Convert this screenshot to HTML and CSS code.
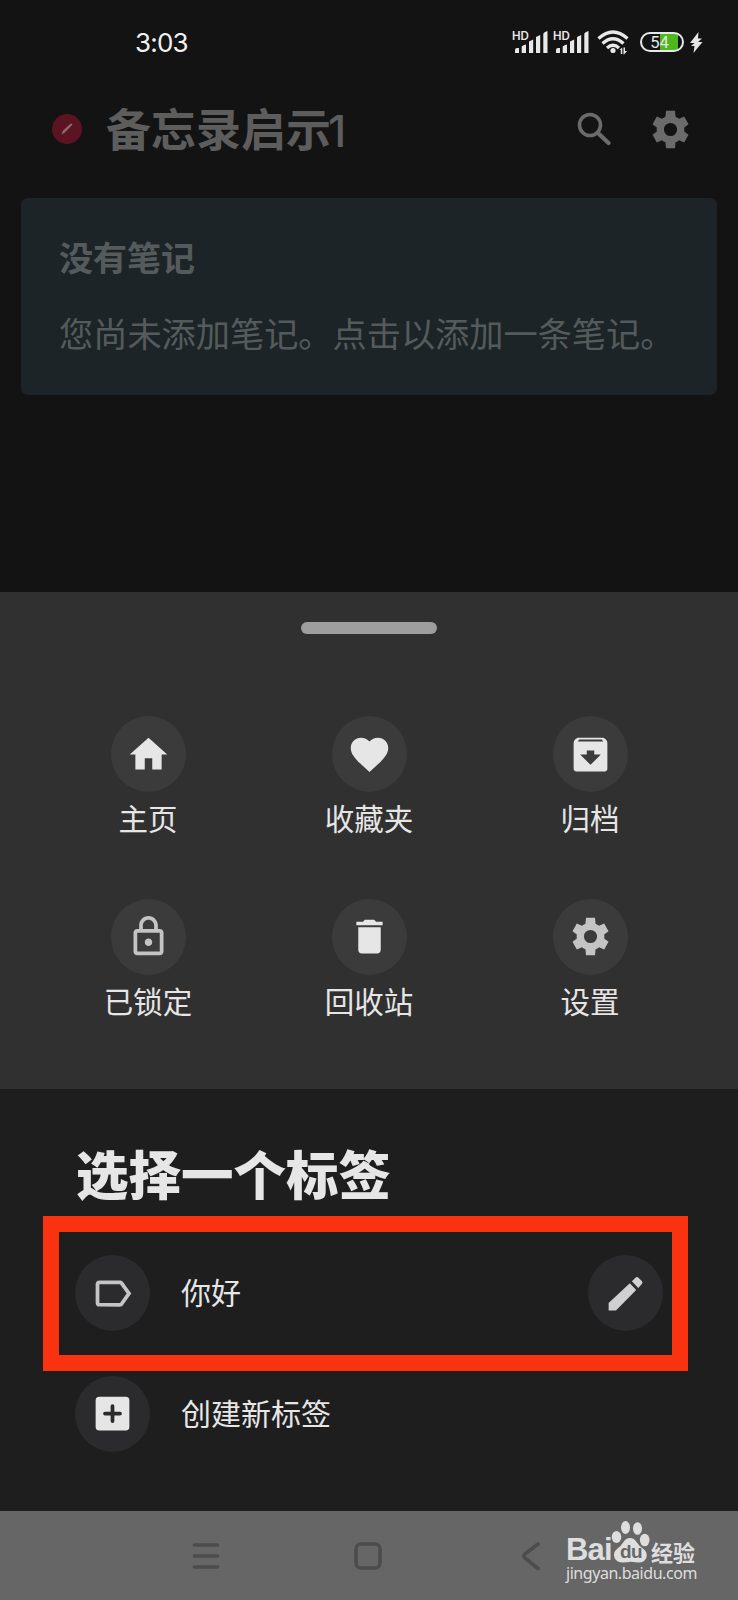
FILE: index.html
```html
<!DOCTYPE html>
<html lang="zh-CN">
<head>
    <meta charset="UTF-8">
    <title>备忘录启示1</title>
    <link rel="stylesheet" href="styles.css">
</head>
<body>
    <svg class="defs">
        <symbol id="gear" viewBox="0 0 24 24">
            <path d="M19.300 13.100c.1-.7.1-1.500 0-2.200l2.300-1.700-2.300-4.100-2.700 1.200c-.6-.5-1.200-.8-1.900-1.100L14.400 2H9.600l-.3 3.200c-.7.300-1.300.600-1.900 1.100L4.700 5.100 2.400 9.200l2.300 1.700c-.1.700-.1 1.500 0 2.200l-2.300 1.700 2.300 4.100 2.700-1.200c.6.500 1.200.8 1.900 1.100l.3 3.200h4.800l.3-3.200c.7-.3 1.300-.6 1.900-1.100l2.700 1.200 2.300-4.100zM12 15.500a3.500 3.500 0 1 1 0-7 3.500 3.500 0 0 1 0 7z"/>
        </symbol>
        <symbol id="signal" viewBox="0 0 34 23">
            <path d="M1 23v-3q0-2 2-2h2v5zM7.700 23v-6q0-1.500 4.300-2.500v8.500zM15 23V11.500l4.200-2V23zM22 23V7l4.200-2V23zM29.300 23V4q0-1.500 4.200-3V23z"/>
        </symbol>
    </svg>

    <div class="status-bar">
        <span class="time">3:03</span>
        <div class="status-icons">
            <div class="sim"><span class="hd">HD</span><svg><use href="#signal"/></svg></div>
            <div class="sim"><span class="hd">HD</span><svg><use href="#signal"/></svg></div>
            <svg class="wifi" viewBox="0 0 32 25">
                <g fill="none" stroke="#e8e8e8" stroke-width="3.300">
                    <path d="M1.500 8.500Q16-4.500 30.500 8.500"/>
                    <path d="M5.500 13.500Q16 4 26.500 13.500"/>
                    <path d="M10 18Q16 12.500 22 18"/>
                </g>
                <circle cx="16" cy="20.500" r="2.600"/>
                <path d="M22.500 20l2.800-2.500V24h-1.500v-4zM26.500 17.500H28V21h2.200L27 24.500h-.5z"/>
            </svg>
            <div class="battery">54</div>
            <svg class="bolt" viewBox="0 0 13 21"><path d="M8.500 0L0 11h4.500L1 14h3.500L3.500 21 12.500 10H8l4-3.500H8z"/></svg>
        </div>
    </div>

    <div class="header">
        <div class="logo">
            <svg viewBox="0 0 30 30"><path d="M9.500 20.500l1.200-3.500 8-7.500q1.800-.3 1.500 1.500L12.500 18.800z"/></svg>
        </div>
        <h1>备忘录启示<span class="one">1</span></h1>
        <svg class="search" viewBox="0 0 34 34">
            <circle cx="13" cy="13" r="10.500" fill="none" stroke="#6b6b6b" stroke-width="3.600"/>
            <path d="M22 22l9.500 9" fill="none" stroke="#6b6b6b" stroke-width="4.300" stroke-linecap="round"/>
        </svg>
        <svg class="settings"><use href="#gear"/></svg>
    </div>

    <div class="note">
        <h2>没有笔记</h2>
        <p>您尚未添加笔记。点击以添加一条笔记。</p>
    </div>

    <div class="sheet">
        <div class="handle"></div>
        <div class="grid">
            <div class="item">
                <div class="circle"><svg viewBox="0 0 24 24"><path d="M10 20v-6h4v6h5v-8h3L12 3 2 12h3v8z"/></svg></div>
                <span>主页</span>
            </div>
            <div class="item">
                <div class="circle"><svg viewBox="0 0 24 24"><path d="M12 21.350l-1.450-1.320C5.400 15.360 2 12.280 2 8.500 2 5.420 4.420 3 7.500 3c1.740 0 3.410.81 4.500 2.090C13.090 3.810 14.760 3 16.500 3 19.580 3 22 5.420 22 8.500c0 3.780-3.400 6.860-8.550 11.540z"/></svg></div>
                <span>收藏夹</span>
            </div>
            <div class="item">
                <div class="circle"><svg viewBox="0 0 24 24"><path fill-rule="evenodd" d="M5.200 3h13.600q2.200 1 2.200 3V19.500q0 1.500-1.500 1.500h-15Q3 21 3 19.500V6q0-2 2.200-3zM6 4l-.8 1h13.600L18 4zM10 9.900V12H6.500l5.500 5.500 5.500-5.500H14V9.900z"/></svg></div>
                <span>归档</span>
            </div>
            <div class="item">
                <div class="circle dim"><svg viewBox="0 0 24 24"><path d="M18 8h-1V6c0-2.760-2.240-5-5-5S7 3.240 7 6v2H6c-1.100 0-2 .9-2 2v10c0 1.100.9 2 2 2h12c1.100 0 2-.9 2-2V10c0-1.100-.9-2-2-2zM9 6c0-1.660 1.340-3 3-3s3 1.340 3 3v2H9V6zm9 14H6V10h12v10zm-6-3c1.100 0 2-.9 2-2s-.9-2-2-2-2 .9-2 2 .9 2 2 2z"/></svg></div>
                <span>已锁定</span>
            </div>
            <div class="item">
                <div class="circle"><svg viewBox="0 0 24 24"><path d="M6 7v12c0 1.300.7 2 2 2h8c1.300 0 2-.7 2-2V7zM19 4.100h-3.500l-1-1h-5l-1 1H5V6h14z"/></svg></div>
                <span>回收站</span>
            </div>
            <div class="item">
                <div class="circle dim"><svg><use href="#gear"/></svg></div>
                <span>设置</span>
            </div>
        </div>
    </div>

    <div class="labels">
        <h2>选择一个标签</h2>
        <div class="row">
            <div class="circle dim"><svg viewBox="0 0 24 24"><path d="M17.630 5.840C17.270 5.330 16.670 5 16 5L5 5.010C3.900 5.010 3 5.900 3 7v10c0 1.100.9 1.990 2 1.990L16 19c.67 0 1.270-.33 1.630-.84L22 12l-4.370-6.160zM16 17H5V7h11l3.550 5L16 17z"/></svg></div>
            <span>你好</span>
            <div class="circle edit"><svg viewBox="0 0 24 24"><path d="M3 21v-3.900L14.300 6.500l3.400 3.600L6.900 21zM15.400 5.500l1.900-1.900q.8-.8 1.600 0l1.800 1.800q.8.800 0 1.600L18.800 9z"/></svg></div>
            <div class="highlight"></div>
        </div>
        <div class="row">
            <div class="circle"><svg viewBox="0 0 24 24"><path fill-rule="evenodd" d="M5 3h14q2 0 2 2v14q0 2-2 2H5q-2 0-2-2V5q0-2 2-2zM11 8v3H8q-1 0-1 1t1 1h3v3q0 1 1 1t1-1v-3h3q1 0 1-1t-1-1h-3V8q0-1-1-1t-1 1z"/></svg></div>
            <span>创建新标签</span>
        </div>
    </div>

    <div class="nav-bar">
        <svg class="menu" viewBox="0 0 27 28"><path d="M2 3h23M2 14h23M2 25h23"/></svg>
        <svg class="home" viewBox="0 0 28 28"><rect x="2" y="2" width="24" height="24" rx="5"/></svg>
        <svg class="back" viewBox="0 0 19 28"><path d="M17 2L4 12q-2.500 2 0 4l13 10.500"/></svg>
        <div class="watermark">
            <div class="brand">
                <span class="bai">Bai</span>
                <div class="paw">
                    <svg viewBox="0 0 39 42">
                        <ellipse cx="5.500" cy="16" rx="4.800" ry="6"/>
                        <ellipse cx="14.500" cy="6.500" rx="4.500" ry="6.500"/>
                        <ellipse cx="26.500" cy="7.500" rx="4.500" ry="6.300"/>
                        <ellipse cx="33.700" cy="19" rx="4.800" ry="6.300"/>
                        <path d="M19 17q4 0 6.500 4t7 7q5 4 2.500 9.500-2 4-7 4-4 0-8-.7-4 .7-8 .7-6 0-8.500-4.500-2-5.500 3-9.500 3.500-2.500 6-6.500t6.500-4z"/>
                    </svg>
                    <span>du</span>
                </div>
                <span class="jy">经验</span>
            </div>
            <div class="url">jingyan.baidu.com</div>
        </div>
    </div>
</body>
</html>
```

FILE: styles.css
```css
* {
    box-sizing: border-box;
}
body {
    margin: 0;
    width: 738px;
    height: 1600px;
    overflow: hidden;
    background-color: #131313;
    color: #e6e6e6;
    font-family: "Noto Sans CJK SC", sans-serif;
}
h1, h2, p {
    margin: 0;
}
svg {
    display: block;
    flex: none;
    fill: currentColor;
}
.defs {
    position: absolute;
    width: 0;
    height: 0;
}

/* status bar */
.status-bar {
    display: flex;
    justify-content: space-between;
    height: 85px;
    padding: 28px 35px 0 135px;
}
.time {
    font-family: Inter, sans-serif;
    font-size: 26px;
    line-height: 30px;
    letter-spacing: -0.8px;
    color: #f2f2f2;
}
.status-icons {
    display: flex;
    align-items: flex-start;
    padding-top: 2px;
}
.sim {
    position: relative;
    width: 41px;
    color: #e8e8e8;
}
.sim svg {
    width: 34px;
    height: 23px;
}
.hd {
    position: absolute;
    left: -2px;
    top: 0;
    font-family: Inter, sans-serif;
    font-size: 11.5px;
    line-height: 12px;
    font-weight: 600;
}
.wifi {
    width: 32px;
    height: 25px;
    margin-left: 1px;
}
.battery {
    width: 44px;
    height: 20px;
    margin: 2px 6px 0 11px;
    padding-right: 5px;
    border: 2px solid #e8e8e8;
    border-radius: 10px;
    background: linear-gradient(90deg, #131313 44%, #4db81e 44%, #4db81e 91%, #131313 91%);
    font-family: Roboto, sans-serif;
    font-size: 16.5px;
    line-height: 17px;
    text-align: center;
}
.bolt {
    width: 13px;
    height: 21px;
    margin-top: 2px;
}

/* app header */
.header {
    display: flex;
    align-items: center;
    height: 88px;
    padding: 0 45px 0 52px;
    color: #6b6b6b;
}
.logo {
    width: 30px;
    height: 30px;
    margin-right: 24px;
    border-radius: 50%;
    background-color: #5d1422;
    color: #8d6a70;
}
.header h1 {
    flex: 1;
    height: 62px;
    font-size: 45px;
    line-height: 60px;
    font-weight: 700;
    color: #5d5d5d;
}
.one {
    font-family: Inter, sans-serif;
    font-size: 44px;
    font-weight: 500;
    margin-left: -3px;
}
.search {
    width: 34px;
    height: 34px;
    margin-right: 37px;
}
.settings {
    width: 45px;
    height: 45px;
}

/* empty note card */
.note {
    height: 197px;
    margin: 25px 21px 0;
    padding: 34px 38px;
    border-radius: 7px;
    background-color: #1d2427;
    color: #555b5c;
}
.note h2 {
    font-size: 34px;
    line-height: 50px;
    font-weight: 700;
}
.note p {
    margin-top: 25px;
    font-size: 34.2px;
    line-height: 50px;
    white-space: nowrap;
}

/* bottom sheet */
.sheet {
    height: 497px;
    margin-top: 197px;
    padding-top: 30px;
    background-color: #303030;
}
.handle {
    width: 136px;
    height: 12px;
    margin: 0 auto 82px;
    border-radius: 6px;
    background-color: #9e9e9e;
}
.grid {
    display: grid;
    grid-template-columns: repeat(3, 221px);
    grid-auto-rows: 182.5px;
    justify-content: center;
}
.item {
    display: flex;
    flex-direction: column;
    align-items: center;
}
.item span {
    margin-top: 5px;
    font-size: 29.5px;
    line-height: 40px;
}
.circle {
    display: flex;
    align-items: center;
    justify-content: center;
    width: 75px;
    height: 76px;
    border-radius: 50%;
    background-color: #3b3b3b;
}
.circle svg {
    width: 45px;
    height: 45px;
}
.dim {
    color: #c4c4c4;
}

/* labels */
.labels {
    height: 422px;
    padding: 43px 75px 0 75px;
    background-color: #1e1e1e;
}
.labels h2 {
    height: 101px;
    padding-left: 1px;
    font-size: 52.5px;
    line-height: 80px;
    font-weight: 900;
}
.row {
    position: relative;
    display: flex;
    align-items: center;
    height: 120.5px;
    font-size: 30px;
}
.row span {
    margin: 0 0 4px 31px;
}
.row .circle {
    background-color: #2b2a2c;
}
.row .edit {
    margin-left: auto;
    color: #d0d0d2;
}
.highlight {
    position: absolute;
    left: -32px;
    top: -17px;
    width: 645px;
    height: 155px;
    border: 16px solid #f9330f;
}

/* navigation bar */
.nav-bar {
    display: flex;
    align-items: flex-start;
    height: 89px;
    padding-left: 192px;
    background-color: #666;
}
.menu, .home, .back {
    height: 28px;
    margin-top: 31px;
    fill: none;
    stroke: #4c4c4c;
    stroke-width: 3.6;
    stroke-linecap: round;
}
.menu {
    width: 28px;
}
.home {
    width: 28px;
    margin-left: 134px;
}
.back {
    width: 19px;
    margin-left: 139px;
}
.watermark {
    margin: 10px 0 0 26px;
    color: #dedede;
}
.brand {
    display: flex;
    align-items: flex-end;
    height: 42px;
}
.bai {
    width: 45px;
    margin-bottom: -4px;
    font-family: "Liberation Sans", sans-serif;
    font-size: 31px;
    line-height: 34px;
    font-weight: 700;
    letter-spacing: -0.8px;
}
.paw {
    position: relative;
    width: 39px;
    height: 42px;
}
.paw svg {
    width: 39px;
    height: 42px;
}
.paw span {
    position: absolute;
    left: 9px;
    bottom: 1px;
    font-family: "Liberation Sans", sans-serif;
    font-size: 19px;
    line-height: 20px;
    font-weight: 700;
    letter-spacing: -0.5px;
    color: #666;
}
.jy {
    margin: 0 0 -2px 1px;
    font-size: 22px;
    line-height: 28px;
    font-weight: 700;
}
.url {
    font-family: "Noto Sans", sans-serif;
    font-size: 16px;
    line-height: 20px;
    letter-spacing: -0.45px;
}
```
